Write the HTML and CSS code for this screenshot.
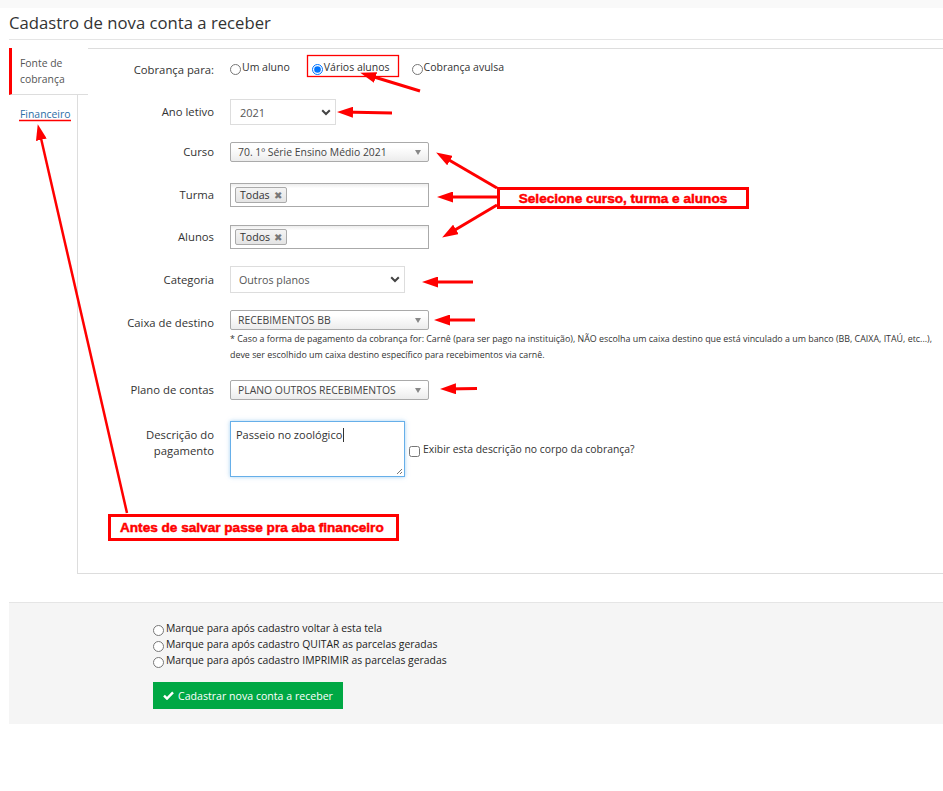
FILE: index.html
```html
<!DOCTYPE html>
<html>
<head>
  <title>Cadastro de nova conta a receber</title>
  <link rel="stylesheet" href="styles.css">
</head>
<body>
  <div class="topbar"></div>
  <div class="page">
    <h1 class="page-title">Cadastro de nova conta a receber</h1>

    <div class="tabs-wrap">
      <ul class="tabs">
        <li class="tab tab-active">Fonte de<br>cobrança</li>
        <li class="tab"><a class="tab-link">Financeiro</a></li>
      </ul>

      <div class="tab-content">
        <div class="form-group first">
          <label class="control-label label-first">Cobrança para:</label>
          <div class="radio-group">
            <label class="radio-inline"><input type="radio" name="tipo">Um aluno</label>
            <label class="radio-inline"><input type="radio" name="tipo" checked>Vários alunos</label>
            <label class="radio-inline"><input type="radio" name="tipo">Cobrança avulsa</label>
          </div>
        </div>

        <div class="form-group gap-md">
          <label class="control-label">Ano letivo</label>
          <div class="select select-sm">
            <span>2021</span>
            <svg class="chevron" width="10" height="7" viewBox="0 0 10 7"><path d="M1.2 1.2L5 5l3.8-3.8" fill="none" stroke="#444" stroke-width="2"/></svg>
          </div>
        </div>

        <div class="form-group">
          <label class="control-label">Curso</label>
          <div class="select2">
            <span>70. 1º Série Ensino Médio 2021</span>
            <b class="select2-arrow"></b>
          </div>
        </div>

        <div class="form-group gap-lg">
          <label class="control-label">Turma</label>
          <div class="select2-multi">
            <span class="tag">Todas <i class="tag-close">&#x2716;</i></span>
          </div>
        </div>

        <div class="form-group gap-md">
          <label class="control-label">Alunos</label>
          <div class="select2-multi">
            <span class="tag">Todos <i class="tag-close">&#x2716;</i></span>
          </div>
        </div>

        <div class="form-group">
          <label class="control-label">Categoria</label>
          <div class="select select-md">
            <span>Outros planos</span>
            <svg class="chevron" width="10" height="7" viewBox="0 0 10 7"><path d="M1.2 1.2L5 5l3.8-3.8" fill="none" stroke="#444" stroke-width="2"/></svg>
          </div>
        </div>

        <div class="form-group top">
          <label class="control-label label-caixa">Caixa de destino</label>
          <div class="control-col">
            <div class="select2">
              <span>RECEBIMENTOS BB</span>
              <b class="select2-arrow"></b>
            </div>
            <p class="help-block">* Caso a forma de pagamento da cobrança for: Carnê (para ser pago na instituição), NÃO escolha um caixa destino que está vinculado a um banco (BB, CAIXA, ITAÚ, etc...),<br>deve ser escolhido um caixa destino específico para recebimentos via carnê.</p>
          </div>
        </div>

        <div class="form-group">
          <label class="control-label">Plano de contas</label>
          <div class="select2">
            <span>PLANO OUTROS RECEBIMENTOS</span>
            <b class="select2-arrow"></b>
          </div>
        </div>

        <div class="form-group gap-lg">
          <label class="control-label label-desc">Descrição do<br>pagamento</label>
          <div class="textarea">Passeio no zoológico<span class="caret"></span>
            <svg class="grip" width="8" height="8" viewBox="0 0 8 8"><path d="M7 2L2 7M7 5L5 7" stroke="#777" stroke-width="1"/></svg>
          </div>
          <label class="checkbox-inline"><input type="checkbox">Exibir esta descrição no corpo da cobrança?</label>
        </div>
      </div>
    </div>

    <div class="actions">
      <label class="radio-line"><input type="radio">Marque para após cadastro voltar à esta tela</label>
      <label class="radio-line"><input type="radio">Marque para após cadastro QUITAR as parcelas geradas</label>
      <label class="radio-line"><input type="radio">Marque para após cadastro IMPRIMIR as parcelas geradas</label>
      <button class="btn-success">
        <svg width="11" height="9" viewBox="0 0 11 9"><path d="M1 4.6l3 3L10 1.4" fill="none" stroke="#fff" stroke-width="2.4"/></svg>
        Cadastrar nova conta a receber
      </button>
    </div>
  </div>

  <svg class="annotations" width="943" height="791" viewBox="0 0 943 791">
    <defs>
      <marker id="head" markerUnits="userSpaceOnUse" markerWidth="16" markerHeight="11" refX="10" refY="5.5" orient="auto">
        <path d="M0 0L16 5.5L0 11z" fill="#f00"/>
      </marker>
    </defs>
    <g stroke="#f00" stroke-width="3" fill="none">
      <line x1="420" y1="91" x2="366" y2="74.5" marker-end="url(#head)"/>
      <line x1="392" y1="113" x2="343" y2="112" marker-end="url(#head)"/>
      <line x1="497" y1="188" x2="441.3" y2="155.5" marker-end="url(#head)"/>
      <line x1="497" y1="197" x2="443" y2="197" marker-end="url(#head)"/>
      <line x1="497" y1="205" x2="447.3" y2="234.5" marker-end="url(#head)"/>
      <line x1="473" y1="282" x2="428" y2="282" marker-end="url(#head)"/>
      <line x1="475" y1="320" x2="440" y2="320" marker-end="url(#head)"/>
      <line x1="477" y1="388.5" x2="446" y2="389" marker-end="url(#head)"/>
      <line x1="127" y1="513" x2="39.1" y2="130" stroke-width="2.5" marker-end="url(#head)"/>
      <rect x="498.5" y="188.5" width="249" height="19"/>
      <rect x="109.5" y="515.5" width="288" height="24"/>
    </g>
    <rect x="307.5" y="55.5" width="91" height="21" fill="none" stroke="#f00" stroke-width="1.3"/>
    <line x1="19" y1="120.5" x2="71" y2="120.5" stroke="#f00" stroke-width="1.5"/>
    <text class="note" x="623" y="202.5" text-anchor="middle">Selecione curso, turma e alunos</text>
    <text class="note" x="120" y="532">Antes de salvar passe pra aba financeiro</text>
  </svg>
</body>
</html>
```

FILE: styles.css
```css
body {
  margin: 0;
  width: 943px;
  position: relative;
  font-family: "Open Sans", sans-serif;
  color: #333;
  background: #fff;
}

.topbar {
  height: 8px;
  background: #f9f9f9;
}

.page {
  padding-left: 9px;
}

.page-title {
  margin: 0 0 8px;
  padding: 3px 0 4px;
  font-size: 16.7px;
  font-weight: 400;
  line-height: 24px;
  color: #333;
  border-bottom: 1px solid #e5e5e5;
}

/* vertical tabs */

.tabs-wrap {
  display: flex;
}

.tabs {
  list-style: none;
  margin: 0;
  padding: 0;
  width: 68px;
  flex: none;
}

.tab {
  font-size: 10.4px;
  line-height: 16px;
}

.tab-active {
  position: relative;
  z-index: 1;
  width: 79px;
  height: 47px;
  box-sizing: border-box;
  padding: 7px 0 0 8px;
  background: #fff;
  color: #555;
  border-left: 3px solid #f00;
  border-bottom: 1px solid #ddd;
}

.tab-link {
  display: block;
  padding: 11px 0 0 11px;
  color: #2b6ea6;
}

.tab-content {
  flex: 1;
  height: 526px;
  box-sizing: border-box;
  padding-top: 10px;
  border: 1px solid #ddd;
  border-right: none;
}

/* form */

.form-group {
  display: flex;
  align-items: center;
  margin-top: 17px;
}

.form-group.first {
  margin-top: 0;
}

.form-group.gap-md {
  margin-top: 18px;
}

.form-group.gap-lg {
  margin-top: 21px;
}

.form-group.top {
  align-items: flex-start;
}

.control-label {
  flex: none;
  width: 136px;
  margin-right: 16px;
  text-align: right;
  font-size: 11.3px;
  line-height: 20px;
  color: #333;
}

.label-first {
  line-height: 22px;
}

.label-caixa {
  padding-top: 3px;
}

.label-desc {
  align-self: flex-start;
  padding-top: 6px;
  line-height: 16px;
}

.radio-group {
  display: flex;
  gap: 10px;
  margin-top: -7px;
}

.radio-inline {
  display: flex;
  align-items: center;
  font-size: 10.5px;
  line-height: 16px;
  padding-right: 12px;
}

.radio-inline input {
  width: 11px;
  height: 11px;
  margin: 5px 1px 0 0;
}

.select {
  height: 26px;
  box-sizing: border-box;
  display: flex;
  align-items: center;
  justify-content: space-between;
  padding: 0 4px 0 9px;
  border: 1px solid #ddd;
  font-size: 11px;
  color: #555;
}

.select-sm {
  width: 106px;
}

.select-md {
  width: 175px;
  height: 27px;
  padding-left: 8px;
  font-size: 10.7px;
}

.select2 {
  width: 199px;
  height: 20px;
  box-sizing: border-box;
  display: flex;
  align-items: center;
  justify-content: space-between;
  padding: 0 7px;
  border: 1px solid #aaa;
  border-radius: 2px;
  background: linear-gradient(#fff 25%, #ececec);
  font-size: 10.4px;
  color: #444;
}

.select2-arrow {
  width: 0;
  height: 0;
  border-left: 3px solid transparent;
  border-right: 3px solid transparent;
  border-top: 5px solid #888;
}

.select2-multi {
  width: 199px;
  height: 24px;
  box-sizing: border-box;
  display: flex;
  align-items: flex-start;
  padding: 3px 4px;
  border: 1px solid #aaa;
  background: linear-gradient(#eee 1%, #fff 20%);
}

.tag {
  display: flex;
  align-items: center;
  height: 16px;
  box-sizing: border-box;
  padding: 0 4px;
  border: 1px solid #aaa;
  border-radius: 2px;
  background: linear-gradient(#f4f4f4, #e4e4e4);
  font-size: 10.6px;
  color: #333;
}

.tag-close {
  margin-left: 4px;
  font-style: normal;
  font-size: 10px;
  color: #777;
}

.control-col {
  display: flex;
  flex-direction: column;
}

.help-block {
  margin: 1px 0 0;
  font-size: 8.9px;
  line-height: 16px;
  white-space: nowrap;
  color: #333;
}

.textarea {
  position: relative;
  width: 175px;
  height: 56px;
  box-sizing: border-box;
  padding: 5px 6px 5px 5px;
  border: 1px solid #66afe9;
  box-shadow: 0 0 4px rgba(102, 175, 233, 0.6);
  font-size: 11px;
  line-height: 15px;
  color: #333;
}

.caret {
  display: inline-block;
  width: 1px;
  height: 14px;
  margin-left: 1px;
  background: #333;
  vertical-align: -3px;
}

.grip {
  position: absolute;
  right: 1px;
  bottom: 1px;
}

.checkbox-inline {
  display: flex;
  align-items: center;
  font-size: 10.4px;
}

.checkbox-inline input {
  width: 11px;
  height: 11px;
  margin: 4px 3px 0 4px;
}

/* footer actions */

.actions {
  margin-top: 28px;
  padding: 17px 0 15px 144px;
  background: #f5f5f5;
  border-top: 1px solid #e5e5e5;
}

.radio-line {
  display: flex;
  align-items: center;
  font-size: 10.4px;
  line-height: 16px;
  color: #222;
}

.radio-line input {
  width: 11px;
  height: 11px;
  margin: 5px 2px 0 0;
}

.btn-success {
  display: flex;
  align-items: center;
  justify-content: center;
  gap: 4px;
  width: 190px;
  height: 27px;
  margin-top: 14px;
  padding: 0;
  border: none;
  background: #00a844;
  color: #fff;
  font-family: "Open Sans", sans-serif;
  font-size: 10.6px;
}

/* screenshot notes */

.annotations {
  position: absolute;
  top: 0;
  left: 0;
  pointer-events: none;
}

.note {
  font-family: "Liberation Sans", Arial, sans-serif;
  font-weight: 700;
  font-size: 13.6px;
  fill: #f00;
  stroke: #f00;
  stroke-width: 0.5;
}
```
